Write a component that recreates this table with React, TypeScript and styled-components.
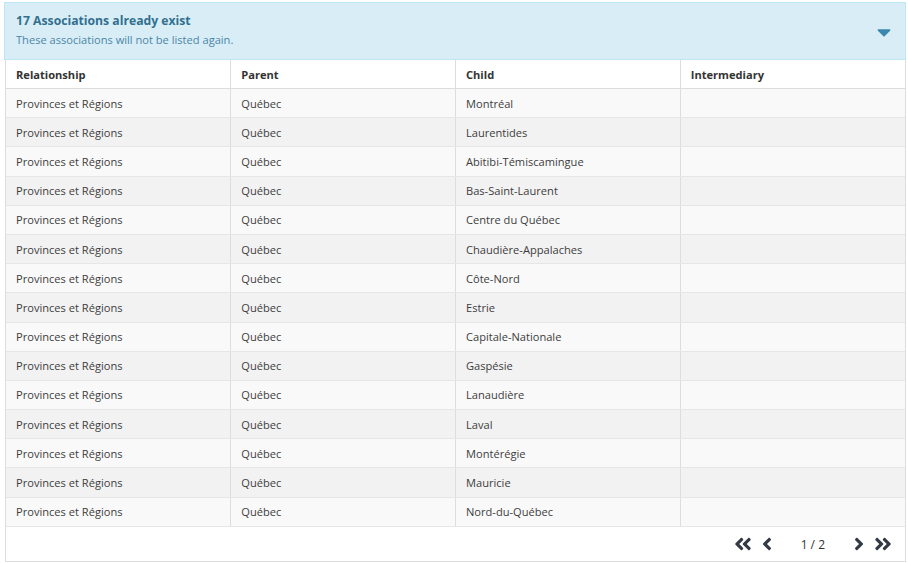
import React from 'react'
import styled, { createGlobalStyle } from 'styled-components'
import {
  FaAngleDoubleLeft,
  FaAngleDoubleRight,
  FaAngleLeft,
  FaAngleRight,
  FaCaretDown
} from 'react-icons/fa'

const GlobalStyle = createGlobalStyle`
  body {
    margin: 0;
    background: #ffffff;
    font-family: "Open Sans", "Noto Sans", sans-serif;
    color: #333333;
  }
`

const children = [
  'Montréal',
  'Laurentides',
  'Abitibi-Témiscamingue',
  'Bas-Saint-Laurent',
  'Centre du Québec',
  'Chaudière-Appalaches',
  'Côte-Nord',
  'Estrie',
  'Capitale-Nationale',
  'Gaspésie',
  'Lanaudière',
  'Laval',
  'Montérégie',
  'Mauricie',
  'Nord-du-Québec'
]

export default function App() {
  return (
    <>
      <GlobalStyle />
      <Page>
        <Alert>
          <AlertText>
            <AlertTitle>17 Associations already exist</AlertTitle>
            <AlertSub>These associations will not be listed again.</AlertSub>
          </AlertText>
          <Caret>
            <FaCaretDown size={22} />
          </Caret>
        </Alert>
        <Panel>
          <Table>
            <thead>
              <tr>
                <Th>Relationship</Th>
                <Th>Parent</Th>
                <Th>Child</Th>
                <Th>Intermediary</Th>
              </tr>
            </thead>
            <tbody>
              {children.map((child, i) => (
                <Row key={child} striped={i % 2 === 1}>
                  <Td>Provinces et Régions</Td>
                  <Td>Québec</Td>
                  <Td>{child}</Td>
                  <Td />
                </Row>
              ))}
            </tbody>
          </Table>
          <Pager>
            <PagerButton>
              <FaAngleDoubleLeft size={20} />
            </PagerButton>
            <PagerButton>
              <FaAngleLeft size={20} />
            </PagerButton>
            <PageLabel>1 / 2</PageLabel>
            <PagerButton>
              <FaAngleRight size={20} />
            </PagerButton>
            <PagerButton>
              <FaAngleDoubleRight size={20} />
            </PagerButton>
          </Pager>
        </Panel>
      </Page>
    </>
  )
}

const Page = styled.div`
  padding: 2px 2px 0 4px;
  width: 902px;
`

const Alert = styled.div`
  display: flex;
  align-items: center;
  justify-content: space-between;
  padding: 0 10px 4px 11px;
  background: #d9edf7;
  border: 1px solid #bce8f1;
  box-sizing: border-box;
  height: 58px;
`

const AlertText = styled.div`
  display: flex;
  flex-direction: column;
  gap: 3px;
`

const AlertTitle = styled.div`
  font-size: 12.2px;
  font-weight: 700;
  color: #31708f;
`

const AlertSub = styled.div`
  font-size: 11.1px;
  color: #4a86a6;
`

const Caret = styled.div`
  display: flex;
  color: #3a87ad;
  margin-top: 6px;
`

const Panel = styled.div`
  margin-left: 1px;
  border: 1px solid #dddddd;
  border-top: none;
`

const Table = styled.table`
  width: 100%;
  border-collapse: collapse;
  table-layout: fixed;
  font-size: 11.1px;
`

const Th = styled.th`
  text-align: left;
  font-weight: 700;
  color: #333333;
  height: 28px;
  padding: 0 10px;
  border-left: 1px solid #dddddd;
  border-bottom: 1px solid #dddddd;
  background: #ffffff;

  &:first-child {
    border-left: none;
  }
`

const Row = styled.tr<{ striped?: boolean }>`
  background: ${(p) => (p.striped ? '#f2f2f2' : '#f9f9f9')};
`

const Td = styled.td`
  height: 28.2px;
  padding: 0 10px;
  color: #3d3d3d;
  border-left: 1px solid #dddddd;
  border-bottom: 1px solid #e6e6e6;

  &:first-child {
    border-left: none;
  }
`

const Pager = styled.div`
  display: flex;
  align-items: center;
  justify-content: flex-end;
  height: 34px;
  padding-right: 10px;
  background: #ffffff;
  color: #333a45;
`

const PagerButton = styled.span`
  display: flex;
  margin: 0 2px;
`

const PageLabel = styled.span`
  font-size: 12px;
  margin: 2px 22px 0 22px;
  color: #333333;
`
